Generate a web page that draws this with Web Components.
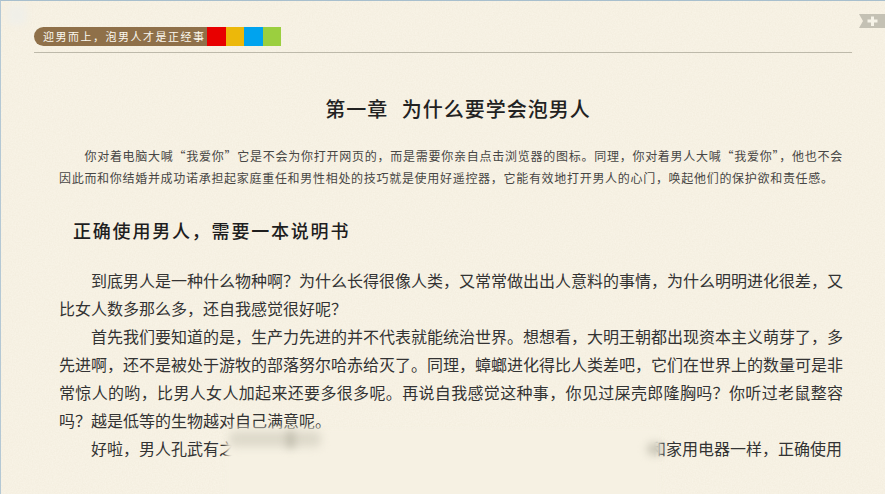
<!DOCTYPE html>
<html lang="zh-CN">
<head>
<meta charset="utf-8">
<title>第一章 为什么要学会泡男人</title>
<style>
    html, body {
        margin: 0;
        height: 100%;
        overflow: hidden;
        background: #f8f3e6;
        font-family: "Noto Sans CJK SC", "Liberation Sans", sans-serif;
    }
</style>
</head>
<body>

<template id="book-page-template">
    <style>
        :host {
            display: block;
            position: relative;
            height: 494px;
            box-sizing: border-box;
            overflow: hidden;
            padding: 26px 33px 0 33px;
            border-top: 1px solid #a8bfcd;
            border-left: 1px solid #b4c8d4;
            background: #f8f3e6;
        }
        .grain {
            position: absolute;
            inset: 0;
            width: 100%;
            height: 100%;
            pointer-events: none;
        }
        .corner {
            position: absolute;
            left: 6px;
            top: 4px;
            width: 20px;
            height: 20px;
            border-radius: 5px;
            background: #f0efe8;
            filter: blur(3px);
        }
        .ribbon {
            position: absolute;
            right: 0;
            top: 13px;
        }
        .content {
            position: relative;
        }
        .text {
            padding: 0 9px 0 25px;
        }
    </style>
    <svg class="grain" aria-hidden="true">
        <filter id="grain-filter">
            <feTurbulence type="fractalNoise" baseFrequency="0.7" numOctaves="3" seed="4"/>
            <feColorMatrix values="0 0 0 0 0.55  0 0 0 0 0.47  0 0 0 0 0.30  0 0 0 0.14 -0.03"/>
        </filter>
        <rect width="100%" height="100%" filter="url(#grain-filter)"/>
    </svg>
    <div class="corner"></div>
    <svg class="ribbon" width="26" height="14" viewBox="0 0 26 14" aria-hidden="true">
        <path d="M0 0H26V14H0L4 7Z" fill="#c4c1b4"/>
        <path d="M12 2.500h3v3h3.500v3h-3.500v3.500h-3v-3.500h-3.500v-3h3.500Z" fill="#f6f3e8"/>
    </svg>
    <div class="content">
        <slot name="header"></slot>
        <div class="text"><slot></slot></div>
    </div>
</template>

<template id="tab-bar-template">
    <style>
        :host {
            display: block;
            padding-bottom: 6px;
            border-bottom: 1px solid #bdb9aa;
        }
        .bar {
            display: flex;
            height: 19px;
        }
        .label {
            width: 173px;
            box-sizing: border-box;
            padding-left: 9px;
            background: #8f7049;
            border-radius: 10px 0 0 10px;
            color: #fbf8ef;
            font-size: 11px;
            letter-spacing: 1.5px;
            line-height: 19px;
            white-space: nowrap;
            overflow: hidden;
        }
        .swatch {
            width: 18.500px;
        }
    </style>
    <div class="bar">
        <div class="label"><slot></slot></div>
        <div class="swatch" style="background:#e80000"></div>
        <div class="swatch" style="background:#ecb80a"></div>
        <div class="swatch" style="background:#00a3ee"></div>
        <div class="swatch" style="background:#9bcf3f"></div>
    </div>
</template>

<template id="chapter-title-template">
    <style>
        :host {
            display: block;
            margin: 41px 0 21px;
            padding-left: 14px;
            text-align: center;
            color: #222;
            font-size: 20px;
            font-weight: 500;
            letter-spacing: 1px;
            word-spacing: 8px;
            line-height: 30px;
        }
    </style>
    <slot></slot>
</template>

<template id="book-intro-template">
    <style>
        :host {
            display: block;
            margin-bottom: 26px;
            color: #474644;
            font-size: 12px;
            letter-spacing: 0.7px;
            line-height: 22px;
            text-indent: 25.400px;
            text-align: justify;
        }
    </style>
    <slot></slot>
</template>

<template id="section-heading-template">
    <style>
        :host {
            display: block;
            margin-bottom: 21px;
            padding-left: 14px;
            color: #1e1e1e;
            font-size: 18px;
            font-weight: 500;
            letter-spacing: 1.800px;
            line-height: 30px;
        }
    </style>
    <slot></slot>
</template>

<template id="book-para-template">
    <style>
        :host {
            display: block;
            position: relative;
            color: #333;
            font-size: 16px;
            line-height: 28px;
            text-indent: 32px;
            text-align: justify;
        }
    </style>
    <slot></slot>
</template>

<template id="text-gap-template">
    <style>
        :host {
            display: inline-block;
            width: 415px;
            height: 1px;
        }
    </style>
</template>

<template id="blur-patch-template">
    <style>
        :host {
            display: block;
            position: absolute;
            left: 168px;
            top: -5px;
            width: 432px;
            height: 70px;
        }
        .paper, .smudge {
            position: absolute;
        }
        .paper {
            inset: 0;
            background: #f6f1e3;
            filter: blur(2.500px);
        }
        .smudge {
            filter: blur(4px);
            border-radius: 6px;
        }
    </style>
    <div class="paper"></div>
    <div class="smudge" style="left:2px;top:2px;width:92px;height:16px;background:#dedacb"></div>
    <div class="smudge" style="left:60px;top:2px;width:7px;height:17px;background:#bdb9aa"></div>
    <div class="smudge" style="left:420px;top:14px;width:16px;height:12px;background:#c9c5b6"></div>
</template>

<book-page>
    <tab-bar slot="header">迎男而上，泡男人才是正经事</tab-bar>
    <chapter-title>第一章&nbsp;为什么要学会泡男人</chapter-title>
    <book-intro>你对着电脑大喊“我爱你”它是不会为你打开网页的，而是需要你亲自点击浏览器的图标。同理，你对着男人大喊“我爱你”，他也不会因此而和你结婚并成功诺承担起家庭重任和男性相处的技巧就是使用好遥控器，它能有效地打开男人的心门，唤起他们的保护欲和责任感。</book-intro>
    <section-heading>正确使用男人，需要一本说明书</section-heading>
    <book-para>到底男人是一种什么物种啊？为什么长得很像人类，又常常做出出人意料的事情，为什么明明进化很差，又比女人数多那么多，还自我感觉很好呢？</book-para>
    <book-para>首先我们要知道的是，生产力先进的并不代表就能统治世界。想想看，大明王朝都出现资本主义萌芽了，多先进啊，还不是被处于游牧的部落努尔哈赤给灭了。同理，蟑螂进化得比人类差吧，它们在世界上的数量可是非常惊人的哟，比男人女人加起来还要多很多呢。再说自我感觉这种事，你见过屎壳郎隆胸吗？你听过老鼠整容吗？越是低等的生物越对自己满意呢。</book-para>
    <book-para>好啦，男人孔武有之<text-gap></text-gap>和家用电器一样，正确使用<blur-patch></blur-patch></book-para>
</book-page>

<script type="module">
    // every element just clones its template into an open shadow root
    function defineFromTemplate(tag, templateId) {
        customElements.define(tag, class extends HTMLElement {
            constructor() {
                super();
                var shadowRoot = this.attachShadow({mode: 'open'});
                var template = document.getElementById(templateId);
                shadowRoot.appendChild(template.content.cloneNode(true));
            }
        });
    }

    defineFromTemplate('book-page', 'book-page-template');
    defineFromTemplate('tab-bar', 'tab-bar-template');
    defineFromTemplate('chapter-title', 'chapter-title-template');
    defineFromTemplate('book-intro', 'book-intro-template');
    defineFromTemplate('section-heading', 'section-heading-template');
    defineFromTemplate('book-para', 'book-para-template');
    defineFromTemplate('text-gap', 'text-gap-template');
    defineFromTemplate('blur-patch', 'blur-patch-template');
</script>
</body>
</html>
